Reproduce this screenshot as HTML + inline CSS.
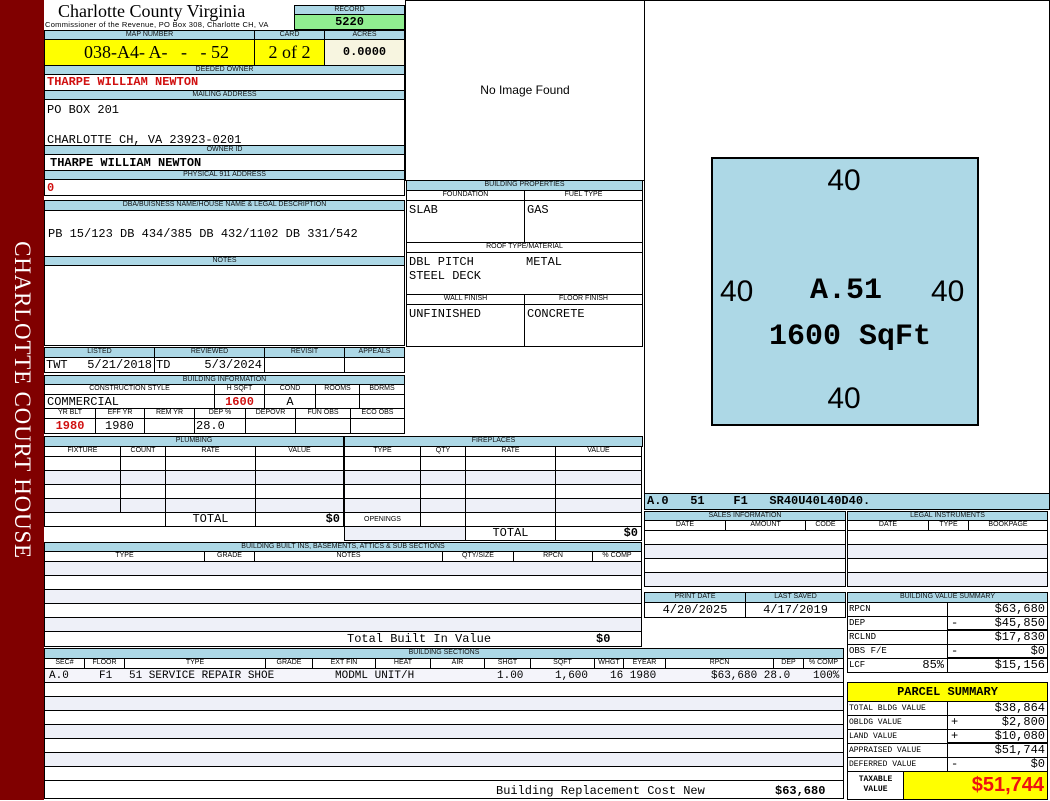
<!DOCTYPE html>
<html><head><meta charset="utf-8"><style>
*{margin:0;padding:0}
body{width:1050px;height:800px;position:relative;background:#fff;overflow:hidden;font-family:"Liberation Sans",sans-serif}
div{position:absolute;box-sizing:border-box}
.b{border:1px solid #000;background:#fff}
.h{border:1px solid #000;background:#add8e6;font-size:7px;text-align:center;line-height:8px;white-space:nowrap;overflow:hidden;color:#111}
.s{border:1px solid #000;background:#fff;font-size:7px;text-align:center;line-height:8px;white-space:nowrap;overflow:hidden}
.m{font-family:"Liberation Mono",monospace;font-size:12px;white-space:nowrap;color:#000}
.r{background:#eef0f8}
.red{color:#d01010;font-weight:bold}
</style></head><body>
<!-- sidebar -->
<div style="left:0;top:0;width:44px;height:800px;background:#800000"></div>
<div style="left:22px;top:400px;width:0;height:0"><div style="left:-200px;top:-14px;width:400px;height:28px;transform:rotate(90deg);color:#fff;font:23px 'Liberation Serif',serif;letter-spacing:0.8px;text-align:center;line-height:28px;white-space:nowrap">CHARLOTTE COURT HOUSE</div></div>

<!-- header -->
<div style="left:58px;top:1px;font:18px 'Liberation Serif',serif;white-space:nowrap">Charlotte County Virginia</div>
<div style="left:45px;top:20px;font-size:7.5px;letter-spacing:0.3px;white-space:nowrap">Commissioner of the Revenue, PO Box 308, Charlotte CH, VA</div>
<div class="h" style="left:294px;top:5px;width:111px;height:10px">RECORD</div>
<div class="s" style="left:294px;top:14px;width:111px;height:16px;background:#90ee90;font:bold 12px 'Liberation Mono',monospace;line-height:14px">5220</div>
<div class="h" style="left:44px;top:30px;width:211px;height:10px">MAP NUMBER</div>
<div class="h" style="left:254px;top:30px;width:71px;height:10px">CARD</div>
<div class="h" style="left:324px;top:30px;width:81px;height:10px">ACRES</div>
<div class="b" style="left:44px;top:39px;width:211px;height:27px;background:#ffff00;font:18px 'Liberation Serif',serif;line-height:25px;text-align:center;padding-left:14px;white-space:pre">038-A4- A-   -   - 52</div>
<div class="b" style="left:254px;top:39px;width:71px;height:27px;background:#ffff00;font:18px 'Liberation Serif',serif;line-height:25px;text-align:center">2 of 2</div>
<div class="b m" style="left:324px;top:39px;width:81px;height:27px;background:#f7f5e0;font-weight:bold;line-height:25px;text-align:center">0.0000</div>
<div class="h" style="left:44px;top:65px;width:361px;height:10px">DEEDED OWNER</div>
<div class="b m red" style="left:44px;top:74px;width:361px;height:17px;line-height:15px;padding-left:2px">THARPE WILLIAM NEWTON</div>
<div class="h" style="left:44px;top:90px;width:361px;height:10px">MAILING ADDRESS</div>
<div class="b m" style="left:44px;top:99px;width:361px;height:47px;padding:3px 2px;line-height:15px">PO BOX 201<br><br>CHARLOTTE CH, VA 23923-0201</div>
<div class="h" style="left:44px;top:145px;width:361px;height:10px">OWNER ID</div>
<div class="b m" style="left:44px;top:154px;width:361px;height:17px;line-height:16px;padding-left:5px;font-weight:bold">THARPE WILLIAM NEWTON</div>
<div class="h" style="left:44px;top:170px;width:361px;height:10px">PHYSICAL 911 ADDRESS</div>
<div class="b m red" style="left:44px;top:179px;width:361px;height:17px;line-height:16px;padding-left:2px">0</div>
<div class="h" style="left:44px;top:200px;width:361px;height:11px">DBA/BUISNESS NAME/HOUSE NAME &amp; LEGAL DESCRIPTION</div>
<div class="b m" style="left:44px;top:210px;width:361px;height:47px;line-height:46px;padding-left:3px">PB 15/123 DB 434/385 DB 432/1102 DB 331/542</div>
<div class="h" style="left:44px;top:256px;width:361px;height:10px">NOTES</div>
<div class="b" style="left:44px;top:265px;width:361px;height:81px"></div>

<div class="h" style="left:44px;top:347px;width:111px;height:11px">LISTED</div>
<div class="h" style="left:154px;top:347px;width:111px;height:11px">REVIEWED</div>
<div class="h" style="left:264px;top:347px;width:81px;height:11px">REVISIT</div>
<div class="h" style="left:344px;top:347px;width:61px;height:11px">APPEALS</div>
<div class="b m" style="left:44px;top:357px;width:111px;height:16px;line-height:14px;padding-left:1px">TWT<span style="position:absolute;right:2px">5/21/2018</span></div>
<div class="b m" style="left:154px;top:357px;width:111px;height:16px;line-height:14px;padding-left:1px">TD<span style="position:absolute;right:2px">5/3/2024</span></div>
<div class="b" style="left:264px;top:357px;width:81px;height:16px"></div>
<div class="b" style="left:344px;top:357px;width:61px;height:16px"></div>

<div class="h" style="left:44px;top:375px;width:361px;height:10px">BUILDING INFORMATION</div>
<div class="s" style="left:44px;top:384px;width:171px;height:11px">CONSTRUCTION STYLE</div>
<div class="s" style="left:214px;top:384px;width:51px;height:11px">H SQFT</div>
<div class="s" style="left:264px;top:384px;width:52px;height:11px">COND</div>
<div class="s" style="left:315px;top:384px;width:45px;height:11px">ROOMS</div>
<div class="s" style="left:359px;top:384px;width:46px;height:11px">BDRMS</div>
<div class="b m" style="left:44px;top:394px;width:171px;height:15px;line-height:14px;padding-left:2px">COMMERCIAL</div>
<div class="b m red" style="left:214px;top:394px;width:51px;height:15px;line-height:14px;text-align:center">1600</div>
<div class="b m" style="left:264px;top:394px;width:52px;height:15px;line-height:14px;text-align:center">A</div>
<div class="b" style="left:315px;top:394px;width:45px;height:15px"></div>
<div class="b" style="left:359px;top:394px;width:46px;height:15px"></div>
<div class="s" style="left:44px;top:408px;width:52px;height:11px">YR BLT</div>
<div class="s" style="left:95px;top:408px;width:50px;height:11px">EFF YR</div>
<div class="s" style="left:144px;top:408px;width:51px;height:11px">REM YR</div>
<div class="s" style="left:194px;top:408px;width:52px;height:11px">DEP %</div>
<div class="s" style="left:245px;top:408px;width:51px;height:11px">DEPOVR</div>
<div class="s" style="left:295px;top:408px;width:56px;height:11px">FUN OBS</div>
<div class="s" style="left:350px;top:408px;width:55px;height:11px">ECO OBS</div>
<div class="b m red" style="left:44px;top:418px;width:52px;height:16px;line-height:14px;text-align:center">1980</div>
<div class="b m" style="left:95px;top:418px;width:50px;height:16px;line-height:14px;padding-left:9px">1980</div>
<div class="b" style="left:144px;top:418px;width:51px;height:16px"></div>
<div class="b m" style="left:194px;top:418px;width:52px;height:16px;line-height:14px;padding-left:1px">28.0</div>
<div class="b" style="left:245px;top:418px;width:51px;height:16px"></div>
<div class="b" style="left:295px;top:418px;width:56px;height:16px"></div>
<div class="b" style="left:350px;top:418px;width:55px;height:16px"></div>

<!-- plumbing -->
<div class="h" style="left:44px;top:436px;width:300px;height:11px">PLUMBING</div>
<div class="s" style="left:44px;top:446px;width:77px;height:11px">FIXTURE</div>
<div class="s" style="left:120px;top:446px;width:46px;height:11px">COUNT</div>
<div class="s" style="left:165px;top:446px;width:91px;height:11px">RATE</div>
<div class="s" style="left:255px;top:446px;width:89px;height:11px">VALUE</div>
<div class="b" style="left:44px;top:456px;width:77px;height:15px"></div><div class="b" style="left:120px;top:456px;width:46px;height:15px"></div><div class="b" style="left:165px;top:456px;width:91px;height:15px"></div><div class="b" style="left:255px;top:456px;width:89px;height:15px"></div>
<div class="b r" style="left:44px;top:470px;width:77px;height:15px"></div><div class="b r" style="left:120px;top:470px;width:46px;height:15px"></div><div class="b r" style="left:165px;top:470px;width:91px;height:15px"></div><div class="b r" style="left:255px;top:470px;width:89px;height:15px"></div>
<div class="b" style="left:44px;top:484px;width:77px;height:15px"></div><div class="b" style="left:120px;top:484px;width:46px;height:15px"></div><div class="b" style="left:165px;top:484px;width:91px;height:15px"></div><div class="b" style="left:255px;top:484px;width:89px;height:15px"></div>
<div class="b r" style="left:44px;top:498px;width:77px;height:15px"></div><div class="b r" style="left:120px;top:498px;width:46px;height:15px"></div><div class="b r" style="left:165px;top:498px;width:91px;height:15px"></div><div class="b r" style="left:255px;top:498px;width:89px;height:15px"></div>
<div class="b" style="left:44px;top:512px;width:122px;height:15px"></div>
<div class="b m" style="left:165px;top:512px;width:91px;height:15px;line-height:13px;text-align:center">TOTAL</div>
<div class="b m" style="left:255px;top:512px;width:89px;height:15px;line-height:13px;text-align:right;padding-right:3px;font-weight:bold">$0</div>

<!-- fireplaces -->
<div class="h" style="left:344px;top:436px;width:299px;height:11px">FIREPLACES</div>
<div class="s" style="left:344px;top:446px;width:77px;height:11px">TYPE</div>
<div class="s" style="left:420px;top:446px;width:46px;height:11px">QTY</div>
<div class="s" style="left:465px;top:446px;width:91px;height:11px">RATE</div>
<div class="s" style="left:555px;top:446px;width:87px;height:11px">VALUE</div>
<div class="b" style="left:344px;top:456px;width:77px;height:15px"></div><div class="b" style="left:420px;top:456px;width:46px;height:15px"></div><div class="b" style="left:465px;top:456px;width:91px;height:15px"></div><div class="b" style="left:555px;top:456px;width:87px;height:15px"></div>
<div class="b r" style="left:344px;top:470px;width:77px;height:15px"></div><div class="b r" style="left:420px;top:470px;width:46px;height:15px"></div><div class="b r" style="left:465px;top:470px;width:91px;height:15px"></div><div class="b r" style="left:555px;top:470px;width:87px;height:15px"></div>
<div class="b" style="left:344px;top:484px;width:77px;height:15px"></div><div class="b" style="left:420px;top:484px;width:46px;height:15px"></div><div class="b" style="left:465px;top:484px;width:91px;height:15px"></div><div class="b" style="left:555px;top:484px;width:87px;height:15px"></div>
<div class="b r" style="left:344px;top:498px;width:77px;height:15px"></div><div class="b r" style="left:420px;top:498px;width:46px;height:15px"></div><div class="b r" style="left:465px;top:498px;width:91px;height:15px"></div><div class="b r" style="left:555px;top:498px;width:87px;height:15px"></div>
<div class="s" style="left:344px;top:512px;width:77px;height:15px;line-height:13px">OPENINGS</div><div class="b" style="left:420px;top:512px;width:46px;height:15px"></div><div class="b" style="left:465px;top:512px;width:91px;height:15px"></div><div class="b" style="left:555px;top:512px;width:87px;height:15px"></div>
<div class="b r" style="left:344px;top:526px;width:122px;height:15px"></div>
<div class="b m" style="left:465px;top:526px;width:91px;height:15px;line-height:13px;text-align:center">TOTAL</div>
<div class="b m" style="left:555px;top:526px;width:87px;height:15px;line-height:13px;text-align:right;padding-right:3px;font-weight:bold">$0</div>

<!-- built ins -->
<div class="h" style="left:44px;top:542px;width:598px;height:10px">BUILDING BUILT INS, BASEMENTS, ATTICS &amp; SUB SECTIONS</div>
<div class="s" style="left:44px;top:551px;width:161px;height:11px">TYPE</div>
<div class="s" style="left:204px;top:551px;width:51px;height:11px">GRADE</div>
<div class="s" style="left:254px;top:551px;width:189px;height:11px">NOTES</div>
<div class="s" style="left:442px;top:551px;width:72px;height:11px">QTY/SIZE</div>
<div class="s" style="left:513px;top:551px;width:80px;height:11px">RPCN</div>
<div class="s" style="left:592px;top:551px;width:50px;height:11px">% COMP</div>
<div class="b r" style="left:44px;top:561px;width:598px;height:15px"></div>
<div class="b" style="left:44px;top:575px;width:598px;height:15px"></div>
<div class="b r" style="left:44px;top:589px;width:598px;height:15px"></div>
<div class="b" style="left:44px;top:603px;width:598px;height:15px"></div>
<div class="b r" style="left:44px;top:617px;width:598px;height:15px"></div>
<div class="b m" style="left:44px;top:631px;width:598px;height:16px;line-height:15px"><span style="position:absolute;left:302px">Total Built In Value</span><span style="position:absolute;left:551px;font-weight:bold">$0</span></div>

<!-- building sections -->
<div class="h" style="left:44px;top:648px;width:800px;height:11px">BUILDING SECTIONS</div>
<div class="s" style="left:44px;top:658px;width:41px;height:11px">SEC#</div>
<div class="s" style="left:84px;top:658px;width:41px;height:11px">FLOOR</div>
<div class="s" style="left:124px;top:658px;width:142px;height:11px">TYPE</div>
<div class="s" style="left:265px;top:658px;width:48px;height:11px">GRADE</div>
<div class="s" style="left:312px;top:658px;width:64px;height:11px">EXT FIN</div>
<div class="s" style="left:375px;top:658px;width:56px;height:11px">HEAT</div>
<div class="s" style="left:430px;top:658px;width:55px;height:11px">AIR</div>
<div class="s" style="left:484px;top:658px;width:47px;height:11px">SHGT</div>
<div class="s" style="left:530px;top:658px;width:65px;height:11px">SQFT</div>
<div class="s" style="left:594px;top:658px;width:30px;height:11px">WHGT</div>
<div class="s" style="left:623px;top:658px;width:43px;height:11px">EYEAR</div>
<div class="s" style="left:665px;top:658px;width:109px;height:11px">RPCN</div>
<div class="s" style="left:773px;top:658px;width:31px;height:11px">DEP</div>
<div class="s" style="left:803px;top:658px;width:41px;height:11px">% COMP</div>
<div class="b m" style="left:44px;top:668px;width:800px;height:15px;line-height:14px;background:#f4f4fa;font-size:11px">
<span style="position:absolute;left:4px">A.0</span><span style="position:absolute;left:54px">F1</span><span style="position:absolute;left:84px">51 SERVICE REPAIR SHOE</span><span style="position:absolute;left:290px">MODML UNIT/H</span><span style="position:absolute;left:452px">1.00</span><span style="position:absolute;left:510px">1,600</span><span style="position:absolute;left:565px">16 1980</span><span style="position:absolute;left:666px">$63,680 28.0</span><span style="position:absolute;left:768px">100%</span></div>
<div class="b" style="left:44px;top:682px;width:800px;height:15px"></div>
<div class="b r" style="left:44px;top:696px;width:800px;height:15px"></div>
<div class="b" style="left:44px;top:710px;width:800px;height:15px"></div>
<div class="b r" style="left:44px;top:724px;width:800px;height:15px"></div>
<div class="b" style="left:44px;top:738px;width:800px;height:15px"></div>
<div class="b r" style="left:44px;top:752px;width:800px;height:15px"></div>
<div class="b" style="left:44px;top:766px;width:800px;height:15px"></div>
<div class="b m" style="left:44px;top:780px;width:800px;height:19px;line-height:20px"><span style="position:absolute;left:451px">Building Replacement Cost New</span><span style="position:absolute;left:730px;font-weight:bold">$63,680</span></div>

<!-- image box -->
<div class="b" style="left:405px;top:0;width:240px;height:181px;font-size:12px;text-align:center;line-height:178px">No Image Found</div>
<div class="h" style="left:406px;top:180px;width:237px;height:11px">BUILDING PROPERTIES</div>
<div class="s" style="left:406px;top:190px;width:119px;height:11px">FOUNDATION</div>
<div class="s" style="left:524px;top:190px;width:119px;height:11px">FUEL TYPE</div>
<div class="b m" style="left:406px;top:200px;width:119px;height:43px;padding:2px">SLAB</div>
<div class="b m" style="left:524px;top:200px;width:119px;height:43px;padding:2px">GAS</div>
<div class="s" style="left:406px;top:242px;width:237px;height:11px">ROOF TYPE/MATERIAL</div>
<div class="b m" style="left:406px;top:252px;width:237px;height:43px;padding:2px;line-height:14px">DBL PITCH<br>STEEL DECK<span style="position:absolute;left:119px;top:2px">METAL</span></div>
<div class="s" style="left:406px;top:294px;width:119px;height:11px">WALL FINISH</div>
<div class="s" style="left:524px;top:294px;width:119px;height:11px">FLOOR FINISH</div>
<div class="b m" style="left:406px;top:304px;width:119px;height:43px;padding:2px">UNFINISHED</div>
<div class="b m" style="left:524px;top:304px;width:119px;height:43px;padding:2px">CONCRETE</div>

<!-- sketch -->
<div class="b" style="left:644px;top:0;width:406px;height:494px"></div>
<div style="left:711px;top:157px;width:268px;height:269px;background:#add8e6;border:2px solid #000"></div>
<div style="left:800px;top:164px;width:88px;text-align:center;font:30px 'Liberation Sans',sans-serif">40</div>
<div style="left:800px;top:382px;width:88px;text-align:center;font:30px 'Liberation Sans',sans-serif">40</div>
<div style="left:720px;top:275px;font:30px 'Liberation Sans',sans-serif">40</div>
<div style="left:931px;top:275px;font:30px 'Liberation Sans',sans-serif">40</div>
<div style="left:760px;top:274px;width:172px;text-align:center;font:bold 30px 'Liberation Mono',monospace">A.51</div>
<div style="left:720px;top:320px;width:260px;text-align:center;font:bold 30px 'Liberation Mono',monospace">1600 SqFt</div>
<div class="b m" style="left:644px;top:493px;width:406px;height:17px;background:#add8e6;font-weight:bold;line-height:14px;padding-left:2px">A.0 &nbsp;&nbsp;51 &nbsp;&nbsp;&nbsp;F1 &nbsp;&nbsp;SR40U40L40D40.</div>

<!-- sales -->
<div class="h" style="left:644px;top:511px;width:202px;height:10px">SALES INFORMATION</div>
<div class="s" style="left:644px;top:520px;width:82px;height:11px">DATE</div>
<div class="s" style="left:725px;top:520px;width:81px;height:11px">AMOUNT</div>
<div class="s" style="left:805px;top:520px;width:41px;height:11px">CODE</div>
<div class="b" style="left:644px;top:530px;width:202px;height:15px"></div>
<div class="b r" style="left:644px;top:544px;width:202px;height:15px"></div>
<div class="b" style="left:644px;top:558px;width:202px;height:15px"></div>
<div class="b r" style="left:644px;top:572px;width:202px;height:15px"></div>
<div class="h" style="left:847px;top:511px;width:201px;height:10px">LEGAL INSTRUMENTS</div>
<div class="s" style="left:847px;top:520px;width:82px;height:11px">DATE</div>
<div class="s" style="left:928px;top:520px;width:41px;height:11px">TYPE</div>
<div class="s" style="left:968px;top:520px;width:80px;height:11px">BOOKPAGE</div>
<div class="b" style="left:847px;top:530px;width:201px;height:15px"></div>
<div class="b r" style="left:847px;top:544px;width:201px;height:15px"></div>
<div class="b" style="left:847px;top:558px;width:201px;height:15px"></div>
<div class="b r" style="left:847px;top:572px;width:201px;height:15px"></div>

<div class="h" style="left:644px;top:592px;width:102px;height:11px">PRINT DATE</div>
<div class="h" style="left:745px;top:592px;width:101px;height:11px">LAST SAVED</div>
<div class="b m" style="left:644px;top:602px;width:102px;height:16px;line-height:14px;text-align:center">4/20/2025</div>
<div class="b m" style="left:745px;top:602px;width:101px;height:16px;line-height:14px;text-align:center">4/17/2019</div>

<!-- value summary -->
<div class="h" style="left:847px;top:592px;width:201px;height:11px">BUILDING VALUE SUMMARY</div>
<div class="b m" style="left:847px;top:602px;width:101px;height:15px;font-size:9px;line-height:13px;padding-left:1px">RPCN</div>
<div class="b m" style="left:947px;top:602px;width:101px;height:15px;line-height:13px;text-align:right;padding-right:2px">$63,680</div>
<div class="b m" style="left:847px;top:616px;width:101px;height:15px;font-size:9px;line-height:13px;padding-left:1px">DEP</div>
<div class="b m" style="left:947px;top:616px;width:101px;height:15px;line-height:13px;text-align:right;padding-right:2px;border-bottom:2px solid #000"><span style="position:absolute;left:3px">-</span>$45,850</div>
<div class="b m" style="left:847px;top:630px;width:101px;height:15px;font-size:9px;line-height:13px;padding-left:1px">RCLND</div>
<div class="b m" style="left:947px;top:630px;width:101px;height:15px;line-height:13px;text-align:right;padding-right:2px">$17,830</div>
<div class="b m" style="left:847px;top:644px;width:101px;height:15px;font-size:9px;line-height:13px;padding-left:1px">OBS F/E</div>
<div class="b m" style="left:947px;top:644px;width:101px;height:15px;line-height:13px;text-align:right;padding-right:2px;border-bottom:2px solid #000"><span style="position:absolute;left:3px">-</span>$0</div>
<div class="b m" style="left:847px;top:658px;width:101px;height:15px;font-size:9px;line-height:13px;padding-left:1px">LCF<span style="position:absolute;right:3px;font-size:12px">85%</span></div>
<div class="b m" style="left:947px;top:658px;width:101px;height:15px;line-height:13px;text-align:right;padding-right:2px">$15,156</div>

<!-- parcel summary -->
<div class="b" style="left:847px;top:682px;width:201px;height:20px;background:#ffff00;font:bold 12px 'Liberation Mono',monospace;text-align:center;line-height:18px">PARCEL SUMMARY</div>
<div class="b m" style="left:847px;top:701px;width:101px;height:15px;font-size:8px;line-height:13px;padding-left:1px">TOTAL BLDG VALUE</div>
<div class="b m" style="left:947px;top:701px;width:101px;height:15px;line-height:13px;text-align:right;padding-right:2px">$38,864</div>
<div class="b m" style="left:847px;top:715px;width:101px;height:15px;font-size:8px;line-height:13px;padding-left:1px">OBLDG VALUE</div>
<div class="b m" style="left:947px;top:715px;width:101px;height:15px;line-height:13px;text-align:right;padding-right:2px"><span style="position:absolute;left:3px">+</span>$2,800</div>
<div class="b m" style="left:847px;top:729px;width:101px;height:15px;font-size:8px;line-height:13px;padding-left:1px">LAND VALUE</div>
<div class="b m" style="left:947px;top:729px;width:101px;height:15px;line-height:13px;text-align:right;padding-right:2px;border-bottom:2px solid #000"><span style="position:absolute;left:3px">+</span>$10,080</div>
<div class="b m" style="left:847px;top:743px;width:101px;height:15px;font-size:8px;line-height:13px;padding-left:1px">APPRAISED VALUE</div>
<div class="b m" style="left:947px;top:743px;width:101px;height:15px;line-height:13px;text-align:right;padding-right:2px">$51,744</div>
<div class="b m" style="left:847px;top:757px;width:101px;height:15px;font-size:8px;line-height:13px;padding-left:1px">DEFERRED VALUE</div>
<div class="b m" style="left:947px;top:757px;width:101px;height:15px;line-height:13px;text-align:right;padding-right:2px"><span style="position:absolute;left:3px">-</span>$0</div>
<div class="b m" style="left:847px;top:771px;width:57px;height:29px;font-size:8px;line-height:10px;text-align:center;padding-top:3px;font-weight:bold">TAXABLE<br>VALUE</div>
<div class="b" style="left:903px;top:771px;width:145px;height:29px;background:#ffff00;color:#ee1111;font:bold 20px 'Liberation Sans',sans-serif;text-align:right;padding-right:3px;line-height:27px">$51,744</div>
</body></html>
